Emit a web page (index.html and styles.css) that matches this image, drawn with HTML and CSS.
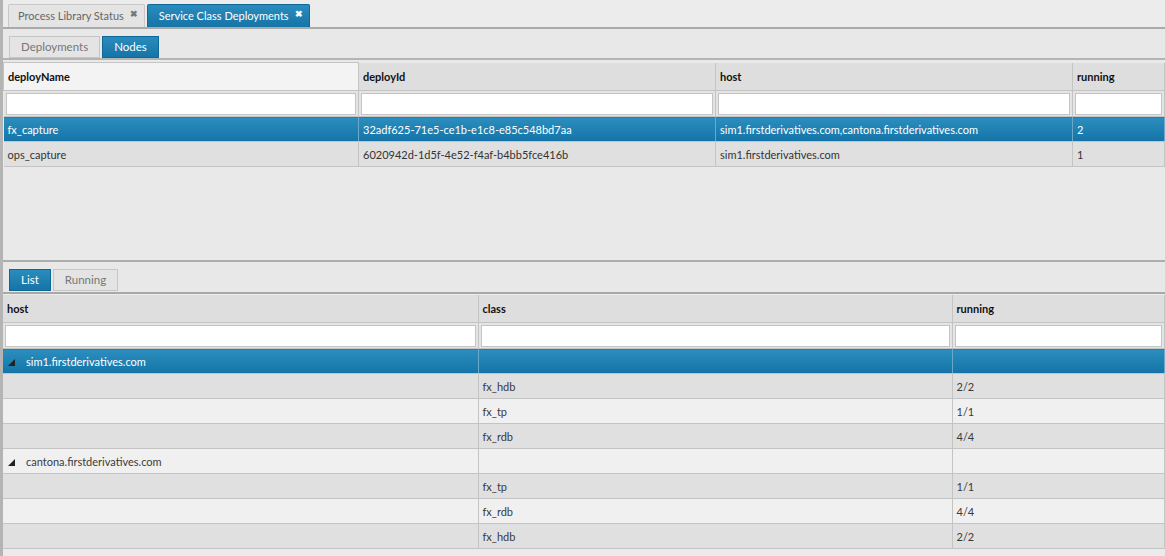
FILE: index.html
```html
<!DOCTYPE html>
<html lang="en">
<head>
    <meta charset="UTF-8">
    <title>Service Class Deployments</title>
    <link rel="stylesheet" href="styles.css">
</head>
<body>
    <div class="page">
        <div class="tabbar">
            <div class="tab">Process Library Status <span class="close">&#10006;</span></div>
            <div class="tab active">Service Class Deployments <span class="close">&#10006;</span></div>
        </div>

        <div class="subtabs">
            <div class="subtab">Deployments</div>
            <div class="subtab active">Nodes</div>
        </div>

        <div class="upper">
            <table class="grid">
                <colgroup>
                    <col style="width:355px"><col style="width:357px"><col style="width:357px"><col>
                </colgroup>
                <thead>
                    <tr class="head">
                        <th class="focus">deployName</th>
                        <th>deployId</th>
                        <th>host</th>
                        <th>running</th>
                    </tr>
                    <tr class="filter">
                        <td><input type="text"></td>
                        <td><input type="text"></td>
                        <td><input type="text"></td>
                        <td><input type="text"></td>
                    </tr>
                </thead>
                <tbody>
                    <tr class="sel">
                        <td>fx_capture</td>
                        <td>32adf625-71e5-ce1b-e1c8-e85c548bd7aa</td>
                        <td>sim1.firstderivatives.com,cantona.firstderivatives.com</td>
                        <td>2</td>
                    </tr>
                    <tr class="dark">
                        <td>ops_capture</td>
                        <td>6020942d-1d5f-4e52-f4af-b4bb5fce416b</td>
                        <td>sim1.firstderivatives.com</td>
                        <td>1</td>
                    </tr>
                </tbody>
            </table>
        </div>

        <div class="splitter"></div>

        <div class="subtabs lower-tabs">
            <div class="subtab active">List</div>
            <div class="subtab">Running</div>
        </div>

        <div class="lower">
            <table class="grid tree">
                <colgroup>
                    <col style="width:475px"><col style="width:474px"><col>
                </colgroup>
                <thead>
                    <tr class="head">
                        <th>host</th>
                        <th>class</th>
                        <th>running</th>
                    </tr>
                    <tr class="filter">
                        <td><input type="text"></td>
                        <td><input type="text"></td>
                        <td><input type="text"></td>
                    </tr>
                </thead>
                <tbody>
                    <tr class="sel group">
                        <td><span class="arrow"><svg width="7" height="7" viewBox="0 0 7 7"><polygon points="7,0 7,7 0,7" fill="#222"/></svg></span>sim1.firstderivatives.com</td>
                        <td></td>
                        <td></td>
                    </tr>
                    <tr class="dark"><td></td><td>fx_hdb</td><td>2/2</td></tr>
                    <tr class="light"><td></td><td>fx_tp</td><td>1/1</td></tr>
                    <tr class="dark"><td></td><td>fx_rdb</td><td>4/4</td></tr>
                    <tr class="light group">
                        <td><span class="arrow"><svg width="7" height="7" viewBox="0 0 7 7"><polygon points="7,0 7,7 0,7" fill="#222"/></svg></span>cantona.firstderivatives.com</td>
                        <td></td>
                        <td></td>
                    </tr>
                    <tr class="dark"><td></td><td>fx_tp</td><td>1/1</td></tr>
                    <tr class="light"><td></td><td>fx_rdb</td><td>4/4</td></tr>
                    <tr class="dark"><td></td><td>fx_hdb</td><td>2/2</td></tr>
                </tbody>
            </table>
        </div>
    </div>
</body>
</html>
```

FILE: styles.css
```css
body {
    margin: 0;
    font-family: Lato, "Open Sans", sans-serif;
    font-size: 11px;
    color: #333;
    background-color: #ebebeb;
}
.page {
    border-left: 3px solid #b4b4b4;
    height: 556px;
    overflow: hidden;
}
.tabbar {
    display: flex;
    align-items: flex-end;
    gap: 2px;
    height: 27px;
    padding-left: 5px;
    background-color: #ececec;
    border-bottom: 2px solid #aaaaaa;
}
.tab {
    height: 22px;
    line-height: 22px;
    padding: 0 6px 0 9px;
    background-color: #e4e4e4;
    border: 1px solid #c8c8c8;
    border-bottom: none;
    border-radius: 2px 2px 0 0;
    color: #666;
    font-size: 11px;
    display: flex;
    gap: 6px;
}
.tab .close {
    font-size: 9px;
    font-weight: bold;
    color: #777;
    line-height: 18px;
}
.tab.active {
    padding-left: 11px;
    background: linear-gradient(#2a8cbe, #1674a6);
    border-color: #0f6896;
    color: #fff;
}
.tab.active .close {
    color: #fff;
}
.subtabs {
    display: flex;
    align-items: flex-end;
    gap: 2px;
    height: 29px;
    padding-left: 6px;
    background-color: #e8e8e8;
    border-bottom: 2px solid #b4b4b4;
}
.subtab {
    height: 20px;
    line-height: 20px;
    padding: 0 11px;
    background-color: #e4e4e4;
    border: 1px solid #c6c6c6;
    color: #777;
    font-size: 11.5px;
}
.subtab.active {
    background: linear-gradient(#2a8cbe, #1674a6);
    border-color: #0f6896;
    color: #fff;
}
.upper {
    height: 198px;
    padding-top: 2px;
    background-color: #e9e9e9;
}
.splitter {
    height: 2px;
    background-color: #adadad;
}
.lower-tabs {
    height: 29px;
    padding-bottom: 1px;
    border-bottom: 2px solid #a8a8a8;
}
.lower {
    padding-top: 1px;
    background-color: #ebebeb;
}
.grid {
    width: 100%;
    table-layout: fixed;
    border-collapse: collapse;
}
.grid th, .grid td {
    height: 24px;
    padding: 0 4px;
    border-right: 1px solid #c4c4c4;
    border-bottom: 1px solid #c4c4c4;
    text-align: left;
    white-space: nowrap;
    overflow: hidden;
}
.grid th {
    height: 27px;
    background-color: #dedede;
    color: #111;
    font-weight: bold;
}
.grid th.focus {
    background-color: #f3f3f3;
    border: 1px solid #c4c4c4;
}
.grid .filter td {
    height: 25px;
    padding: 0 2px;
    background-color: #e4e4e4;
}
.grid input {
    box-sizing: border-box;
    display: block;
    width: 100%;
    height: 22px;
    margin: 0;
    border: 1px solid #c4c4c4;
    background-color: #fff;
}
.grid .sel td {
    background: linear-gradient(#2c8dbf, #1474a7);
    color: #fff;
    border-right-color: #6aa8c9;
}
.grid .dark td {
    background-color: #e0e0e0;
}
.grid .light td {
    background-color: #f0f0f0;
}
.tree td {
    color: #3a3a3a;
}
.arrow {
    display: inline-block;
    width: 18px;
    padding-left: 1px;
}
.tree .group td:first-child {
    padding-left: 4px;
}
```
